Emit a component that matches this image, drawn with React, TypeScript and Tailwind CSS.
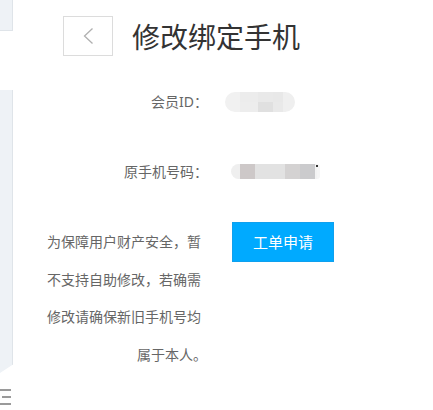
import React from "react";

const font = { fontFamily: '"Noto Sans CJK SC", "Noto Sans", sans-serif' };
const labelFont = { fontFamily: '"Noto Sans", "Noto Sans CJK SC", sans-serif' };

function Sidebar() {
  return (
    <div className="relative w-[13px] shrink-0 flex flex-col">
      <div className="h-[31px] w-[13px] bg-[#eef2f6] border-r border-b border-[#dfe4e9]" />
      <div className="h-[59px]" />
      <div className="h-[283px] w-[13px] bg-[#eef2f6] border-r border-[#dfe4e9] [clip-path:polygon(0_0,100%_0,100%_97%,0_100%)]" />
      <div className="mt-[16px] flex flex-col gap-[5px] w-[11px]">
        <div className="h-[2px] bg-[#9a9a9a]" />
        <div className="h-[2px] bg-[#9a9a9a] ml-[2px]" />
        <div className="h-[2px] bg-[#9a9a9a]" />
      </div>
    </div>
  );
}

function IdBlur() {
  return (
    <div className="ml-[17px] h-[20px] w-[70px] rounded-full overflow-hidden flex">
      <div className="w-[15px] bg-[#f1f1f1]" />
      <div className="w-[18px] flex flex-col">
        <div className="h-[10px] bg-[#ececec]" />
        <div className="h-[10px] bg-[#ededed]" />
      </div>
      <div className="w-[15px] flex flex-col">
        <div className="h-[10px] bg-[#e9e9e9]" />
        <div className="h-[10px] bg-[#e0e0e0]" />
      </div>
      <div className="w-[10px] flex flex-col">
        <div className="h-[10px] bg-[#e8e8e8]" />
        <div className="h-[10px] bg-[#e9e9e9]" />
      </div>
      <div className="w-[12px] bg-[#efefef]" />
    </div>
  );
}

function PhoneBlur() {
  return (
    <div className="relative ml-[23px] h-[15px] w-[89px] flex">
      <div className="flex h-[15px] w-[86px] rounded-l-full overflow-hidden">
        <div className="w-[9px] bg-[#efefef]" />
        <div className="w-[15px] bg-[#cdc8c8]" />
        <div className="w-[30px] bg-[#e2e2e2]" />
        <div className="w-[15px] bg-[#d4d2d2]" />
        <div className="w-[15px] bg-[#cbcbcd]" />
        <div className="w-[2px] bg-[#f3f3f3]" />
      </div>
      <div className="w-[3px] h-[15px] bg-[#f6f6f6] rounded-r-full" />
      <div className="absolute right-[2px] top-[1px] w-[2px] h-[2px] bg-[#333]" />
    </div>
  );
}

export default function App() {
  return (
    <div className="w-[433px] h-[410px] bg-white flex overflow-hidden" style={font}>
      <Sidebar />
      <div className="flex-1 flex flex-col">
        <div className="mt-[16px] flex items-center">
          <div className="ml-[50px] w-[50px] h-[40px] border border-[#dcdcdc] flex items-center justify-center">
            <svg width="12" height="18" viewBox="0 0 12 18" fill="none" className="-ml-[1px]">
              <path d="M10.5 1.5 L2.5 9 L10.5 16.5" stroke="#b0b0b0" strokeWidth="1.3" />
            </svg>
          </div>
          <div className="ml-[19px] text-[28px] leading-[40px] text-[#333]">修改绑定手机</div>
        </div>

        <div className="mt-[36px] h-[20px] flex items-center">
          <div className="w-[195px] text-right text-[14px] leading-[20px] text-[#666]" style={labelFont}>会员ID：</div>
          <IdBlur />
        </div>

        <div className="mt-[52px] h-[15px] flex items-center">
          <div className="w-[195px] text-right text-[14px] leading-[20px] text-[#666]" style={labelFont}>原手机号码：</div>
          <PhoneBlur />
        </div>

        <div className="mt-[43px] flex items-start">
          <div className="ml-[34px] w-[168px] text-[14px] leading-[37.5px] text-[#666] mt-[1px]">
            <div>为保障用户财产安全，暂</div>
            <div>不支持自助修改，若确需</div>
            <div>修改请确保新旧手机号均</div>
            <div className="pl-[90px]">属于本人。</div>
          </div>
          <button className="ml-[17px] w-[102px] h-[40px] bg-[#00aaff] border border-[#0fa0ee] text-white text-[15px]">
            工单申请
          </button>
        </div>
      </div>
    </div>
  );
}
